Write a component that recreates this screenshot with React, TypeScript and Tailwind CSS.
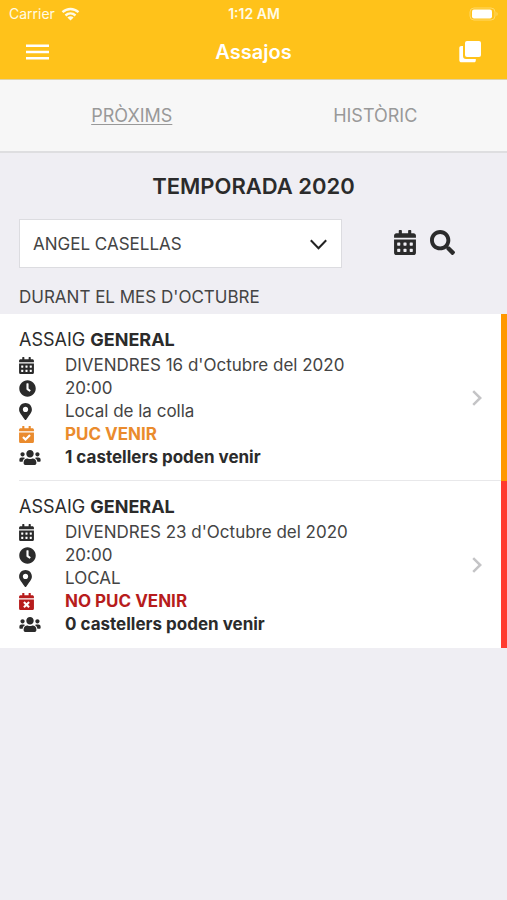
import { useState } from "react";
import type { ReactNode } from "react";
import {
  FaCalendarAlt,
  FaCalendarCheck,
  FaCalendarTimes,
  FaClock,
  FaMapMarkerAlt,
  FaSearch,
  FaUsers,
} from "react-icons/fa";

type Rehearsal = {
  id: number;
  date: string;
  time: string;
  place: string;
  attending: boolean;
  count: number;
};

const rehearsals: Rehearsal[] = [
  { id: 1, date: "DIVENDRES 16 d'Octubre del 2020", time: "20:00", place: "Local de la colla", attending: true, count: 1 },
  { id: 2, date: "DIVENDRES 23 d'Octubre del 2020", time: "20:00", place: "LOCAL", attending: false, count: 0 },
];

function StatusBar() {
  return (
    <div className="grid h-7 grid-cols-3 items-center pr-2 pl-[9px] text-sm text-[#fffbe6]">
      <div className="flex items-center gap-[6px]">
        <span>Carrier</span>
        <svg className="h-[14px] w-[19px]" viewBox="0 0 18 14" fill="none" stroke="currentColor" strokeWidth="2.4" aria-hidden="true">
          <path d="M1 5.2C5.6.9 12.400 .9 17 5.200" />
          <path d="M4 8.500C6.900 5.900 11.100 5.900 14 8.500" />
          <path d="M9 13.500 5.900 10.400C7.600 8.900 10.400 8.900 12.100 10.400Z" fill="currentColor" stroke="none" />
        </svg>
      </div>
      <span className="text-center font-semibold">1:12 AM</span>
      <svg className="h-[14px] w-[30px] justify-self-end" viewBox="0 0 30 14" fill="none" aria-hidden="true">
        <rect x="1" y="1" width="25" height="12" rx="4" stroke="#ffd866" />
        <rect x="3" y="2.500" width="20" height="9" rx="2" fill="#fff" />
        <path d="M27.500 5v4c1.500-.6 1.500-3.400 0-4Z" fill="#ffd866" />
      </svg>
    </div>
  );
}

function Toolbar() {
  return (
    <div className="flex h-[51px] items-center justify-between px-[26px] pb-1 text-white">
      <button type="button" aria-label="Menú" className="flex w-6 justify-start">
        <svg className="h-4 w-[23px]" viewBox="0 0 23 16" fill="currentColor" aria-hidden="true">
          <rect y="0.500" width="23" height="2.500" />
          <rect y="6.750" width="23" height="2.500" />
          <rect y="13" width="23" height="2.500" />
        </svg>
      </button>
      <h1 className="text-xl font-semibold">Assajos</h1>
      <button type="button" aria-label="Copia" className="flex w-6 justify-end">
        <svg className="h-[22px] w-[22px]" viewBox="0 0 22 22" fill="currentColor" aria-hidden="true">
          <rect x="6" y="0" width="16" height="16" rx="2" />
          <path d="M4 5H2.500C1 5 .3 5.800 .3 7v12c0 1.500.8 2.300 2.200 2.300H15c1.200 0 1.800-.7 1.800-1.800V18H7c-2 0-3-1-3-3Z" />
        </svg>
      </button>
    </div>
  );
}

function Detail({ icon, className = "", children }: { icon: ReactNode; className?: string; children: ReactNode }) {
  return (
    <div className={`flex h-[23px] items-center ${className}`}>
      <span className="w-[46px] shrink-0">{icon}</span>
      <span>{children}</span>
    </div>
  );
}

function RehearsalItem({ item, last }: { item: Rehearsal; last: boolean }) {
  return (
    <li className={`border-r-[6px] bg-white pl-[19px] ${item.attending ? "border-[#ff9800]" : "border-[#ff3b30]"}`}>
      <button
        type="button"
        className={`flex w-full items-center justify-between border-b pt-3 pr-[19px] pb-[11px] text-left ${last ? "border-white" : "border-[#e8e8ea]"}`}
      >
        <div className="text-[17px] text-[#444]">
          <h3 className="h-7 text-lg text-[#2b2b2b]">
            ASSAIG <strong className="font-bold">GENERAL</strong>
          </h3>
          <Detail icon={<FaCalendarAlt className="h-[17px] w-[15px] text-[#2b2b2b]" />}>{item.date}</Detail>
          <Detail icon={<FaClock className="size-[17px] text-[#2b2b2b]" />}>{item.time}</Detail>
          <Detail icon={<FaMapMarkerAlt className="h-[17px] w-[13px] text-[#2b2b2b]" />}>{item.place}</Detail>
          {item.attending ? (
            <Detail className="font-bold text-[#ea8b2d]" icon={<FaCalendarCheck className="h-[17px] w-[15px]" />}>
              PUC VENIR
            </Detail>
          ) : (
            <Detail className="font-bold text-[#b71c1c]" icon={<FaCalendarTimes className="h-[17px] w-[15px]" />}>
              NO PUC VENIR
            </Detail>
          )}
          <Detail className="font-bold text-[#2b2b2b]" icon={<FaUsers className="h-[17px] w-[22px]" />}>
            {item.count} castellers poden venir
          </Detail>
        </div>
        <svg className="h-4 w-[10px]" viewBox="0 0 10 16" fill="none" stroke="#c4c4c6" strokeWidth="2.500" aria-hidden="true">
          <path d="m1.200 1.200 7 6.800-7 6.800" />
        </svg>
      </button>
    </li>
  );
}

export default function App() {
  const [tab, setTab] = useState("PRÒXIMS");

  return (
    <div className="min-h-screen bg-[#efeef3] font-[Inter,'Liberation_Sans',sans-serif] text-[#2b2b2b]">
      <header className="border-b border-[#e0d2a4] bg-[#ffc21a]">
        <StatusBar />
        <Toolbar />
      </header>

      <nav className="grid h-[73px] grid-cols-2 border-b-2 border-[#dedee0] bg-[#f7f7f7] px-[10px] text-lg text-[#999]">
        {["PRÒXIMS", "HISTÒRIC"].map((name) => (
          <button
            key={name}
            type="button"
            onClick={() => setTab(name)}
            className={tab === name ? "underline decoration-1 underline-offset-2" : ""}
          >
            {name}
          </button>
        ))}
      </nav>

      <main>
        <h2 className="pt-[17px] text-center text-[22px] leading-8 font-semibold">TEMPORADA 2020</h2>

        <div className="mt-[17px] flex items-center pl-[19px]">
          <div className="relative grow">
            <select
              aria-label="Casteller"
              className="h-[49px] w-full appearance-none border border-[#dcdce0] bg-white pt-[2px] pl-[13px] text-[17px] text-[#444]"
            >
              <option>ANGEL CASELLAS</option>
            </select>
            <svg
              className="pointer-events-none absolute top-5 right-[15px] h-[11px] w-[17px]"
              viewBox="0 0 17 11"
              fill="none"
              stroke="#222"
              strokeWidth="2"
              aria-hidden="true"
            >
              <path d="m.8 1.200 7.700 8 7.700-8" />
            </svg>
          </div>
          <div className="flex w-[165px] items-center justify-center gap-[14px] pb-[2px]">
            <button type="button" aria-label="Calendari">
              <FaCalendarAlt className="h-[25px] w-[22px]" />
            </button>
            <button type="button" aria-label="Cerca">
              <FaSearch className="size-[25px]" />
            </button>
          </div>
        </div>

        <h3 className="pt-[17px] pb-[5px] pl-[19px] text-[17px] leading-6 text-[#444]">DURANT EL MES D'OCTUBRE</h3>

        <ul>
          {rehearsals.map((item, i) => (
            <RehearsalItem key={item.id} item={item} last={i === rehearsals.length - 1} />
          ))}
        </ul>
      </main>
    </div>
  );
}
